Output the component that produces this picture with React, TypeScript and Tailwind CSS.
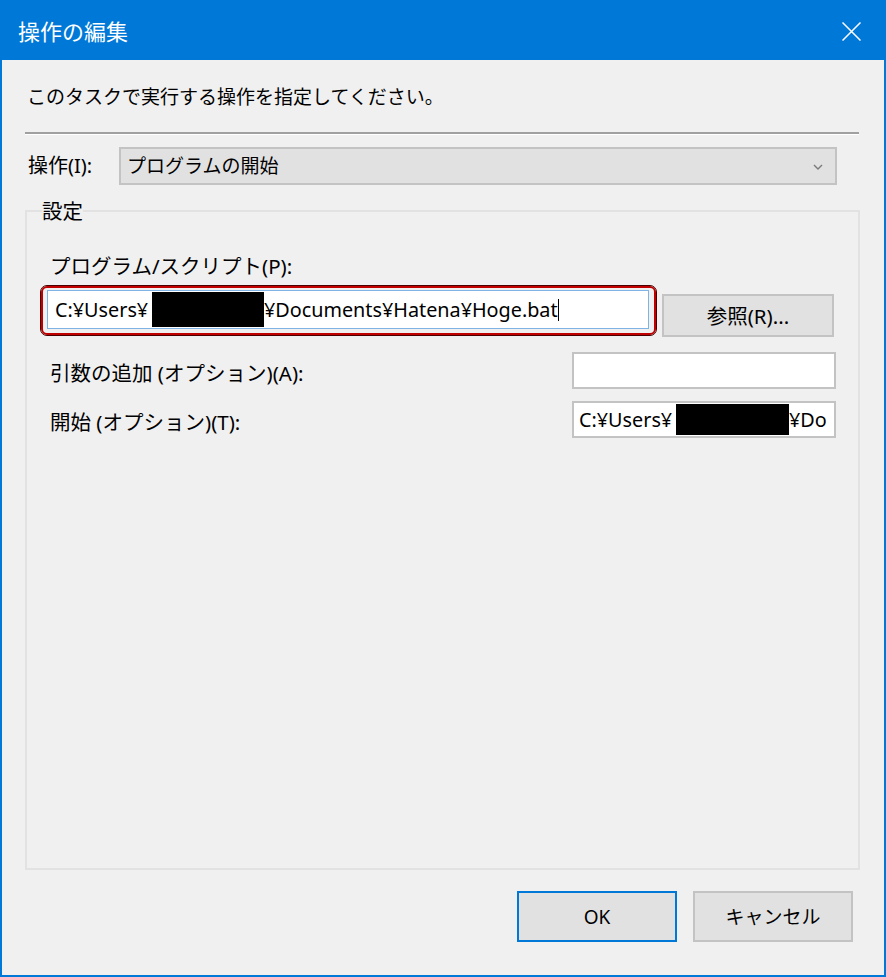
const ui = "font-['Noto_Sans','Noto_Sans_CJK_JP',sans-serif]";

function Redacted({ w }: { w: number }) {
  // 黒塗り部分
  return <span className="bg-black self-stretch my-[1px] shrink-0" style={{ width: w }} />;
}

export default function App() {
  return (
    <div className={`w-[886px] h-[977px] bg-[#0078d7] flex flex-col px-[2px] pb-[2px] ${ui}`}>
      <div className="h-[60px] shrink-0 flex items-center justify-between pl-[16px] pr-[23px]">
        <span className="text-white text-[22px] leading-[28px] font-['Noto_Sans_CJK_JP',sans-serif]">
          操作の編集
        </span>
        <svg width="19" height="19" viewBox="0 0 19 19" className="mt-[2px]">
          <path d="M0.5 0.5l18 18M18.5 0.5l-18 18" stroke="white" strokeWidth="1.5" />
        </svg>
      </div>

      <div className="flex-1 bg-[#f0f0f0] flex flex-col text-[19px] leading-[24px] text-black">
        <p className="mt-[25px] ml-[25px]">このタスクで実行する操作を指定してください。</p>

        <div className="mt-[23px] ml-[23px] w-[834px] h-[3px] border-t-2 border-[#a0a0a0] border-b border-b-white" />

        <div className="mt-[12px] ml-[26px] flex items-center">
          <span className="w-[91px] text-[20px]">操作(I):</span>
          <div className="w-[718px] h-[38px] bg-[#e1e1e1] border-2 border-[#c3c3c3] flex items-center justify-between pl-[6px] pr-[12px]">
            <span>プログラムの開始</span>
            <svg width="10" height="6" viewBox="0 0 10 6" className="mt-[2px]">
              <path d="M1 1l4 4 4-4" fill="none" stroke="#7a7a7a" strokeWidth="1.4" />
            </svg>
          </div>
        </div>

        <div className="mt-[25px] ml-[23px] w-[835px] h-[660px] border-2 border-[#e2e2e2] flex flex-col text-[20.5px]">
          <span className="-mt-[13px] ml-[15px] w-fit bg-[#f0f0f0]">設定</span>

          <span className="mt-[31px] ml-[23px]">プログラム/スクリプト(P):</span>

          <div className="mt-[8px] flex items-start">
            <div className="ml-[14px] w-[615px] h-[49px] rounded-[6px] border-2 border-[#c00000] outline outline-[#4a0000] pl-[4px] pr-[5px] pt-[2px] pb-[4px]">
              <div className="h-full bg-white border border-[#7fb2e5] flex items-stretch pl-[7px] whitespace-nowrap overflow-hidden text-[19.8px]">
                <span className="self-center w-[97px] shrink-0">C:¥Users¥</span>
                <Redacted w={112} />
                <span className="self-center">¥Documents¥Hatena¥Hoge.bat</span>
                <span className="self-center w-[1px] h-[22px] bg-black" />
              </div>
            </div>
            <button className="ml-[6px] mt-[8px] w-[172px] h-[43px] bg-[#e1e1e1] border-2 border-[#c3c3c3]">
              参照(R)...
            </button>
          </div>

          <div className="mt-[15px] flex items-center">
            <span className="ml-[23px] mt-[4px]">引数の追加 (オプション)(A):</span>
            <div className="ml-auto mr-[22px] w-[264px] h-[37px] bg-white border-2 border-[#c3c3c3]" />
          </div>

          <div className="mt-[12px] flex items-center">
            <span className="ml-[23px] mt-[4px]">開始 (オプション)(T):</span>
            <div className="ml-auto mr-[22px] w-[264px] h-[37px] bg-white border-2 border-[#c3c3c3] flex items-stretch pl-[5px] whitespace-nowrap overflow-hidden text-[19.8px]">
              <span className="self-center w-[97px] shrink-0">C:¥Users¥</span>
              <Redacted w={113} />
              <span className="self-center">¥Do</span>
            </div>
          </div>
        </div>

        <div className="mt-[21px] mr-[31px] flex justify-end gap-[16px]">
          <button className="w-[160px] h-[51px] bg-[#e1e1e1] border-2 border-[#0078d7]">OK</button>
          <button className="w-[160px] h-[51px] bg-[#e1e1e1] border-2 border-[#c3c3c3]">キャンセル</button>
        </div>
      </div>
    </div>
  );
}
